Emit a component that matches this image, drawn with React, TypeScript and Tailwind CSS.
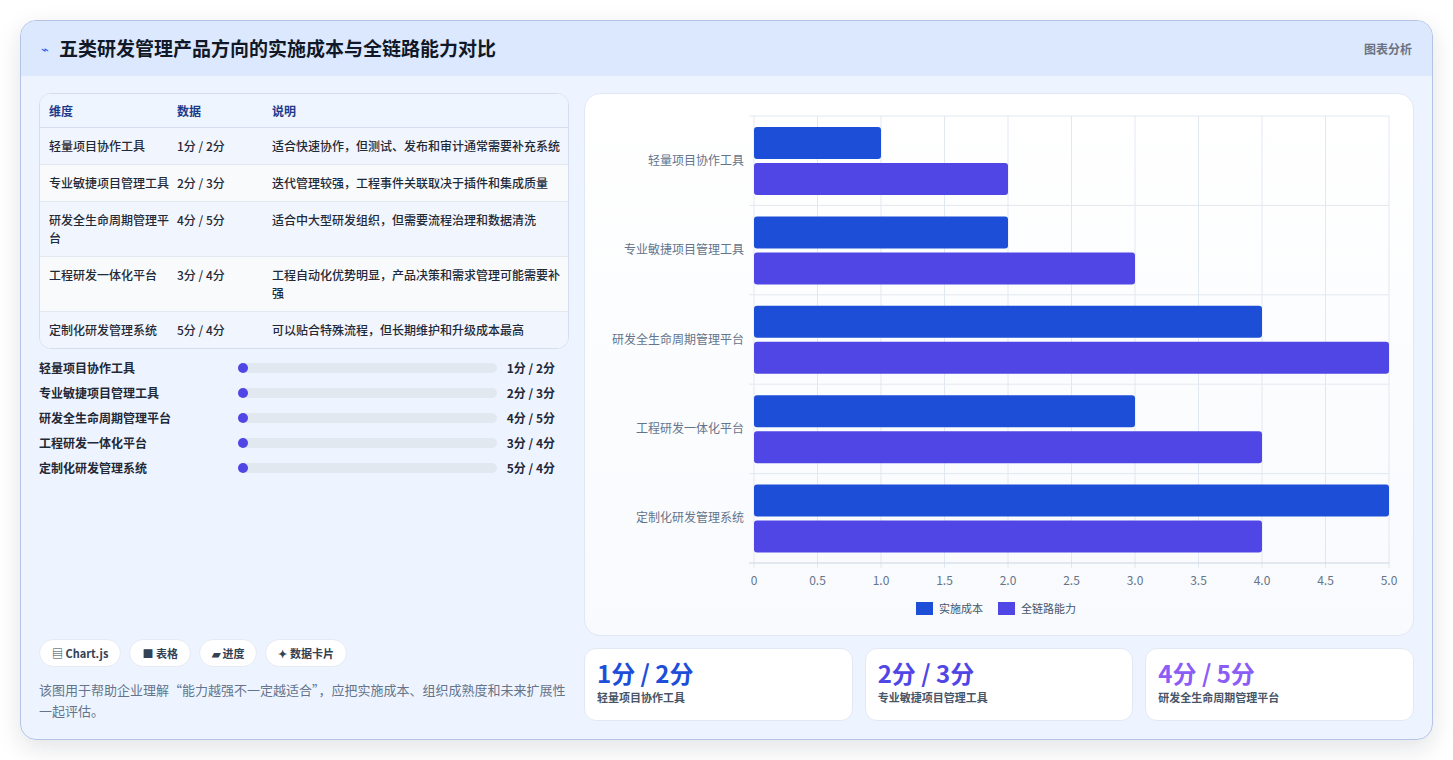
const rows = [
  { name: "轻量项目协作工具", data: "1分 / 2分", desc: "适合快速协作，但测试、发布和审计通常需要补充系统", a: 1, b: 2 },
  { name: "专业敏捷项目管理工具", data: "2分 / 3分", desc: "迭代管理较强，工程事件关联取决于插件和集成质量", a: 2, b: 3 },
  { name: "研发全生命周期管理平台", data: "4分 / 5分", desc: "适合中大型研发组织，但需要流程治理和数据清洗", a: 4, b: 5 },
  { name: "工程研发一体化平台", data: "3分 / 4分", desc: "工程自动化优势明显，产品决策和需求管理可能需要补强", a: 3, b: 4 },
  { name: "定制化研发管理系统", data: "5分 / 4分", desc: "可以贴合特殊流程，但长期维护和升级成本最高", a: 5, b: 4 },
];

function Chart() {
  const L = 169, R = 804, T = 22, B = 469;
  const unit = (R - L) / 5;
  const band = (B - T) / 5;
  const ticks = [0, 0.5, 1, 1.5, 2, 2.5, 3, 3.5, 4, 4.5, 5];
  return (
    <svg width="828" height="542" className="block" style={{ fontFamily: "'Noto Sans CJK SC', sans-serif" }}>
      {ticks.map((t) => (
        <line key={t} x1={L + t * unit} x2={L + t * unit} y1={T} y2={B + 5} stroke="#e2e8f0" />
      ))}
      {[0, 1, 2, 3, 4, 5].map((i) => (
        <line key={i} x1={L - 5} x2={R} y1={T + i * band} y2={T + i * band} stroke={i === 5 ? "#cbd5e1" : "#e2e8f0"} />
      ))}
      {rows.map((r, i) => {
        const y0 = T + i * band;
        return (
          <g key={r.name}>
            <rect x={L} y={y0 + 11} width={r.a * unit} height={32} rx={3} fill="#1d4ed8" />
            <rect x={L} y={y0 + 47} width={r.b * unit} height={32} rx={3} fill="#4f46e5" />
            <text x={L - 10} y={y0 + band / 2 + 4} textAnchor="end" fontSize="12" fill="#64748b">{r.name}</text>
          </g>
        );
      })}
      {ticks.map((t) => (
        <text key={t} x={L + t * unit} y={B + 22} textAnchor="middle" fontSize="12" fill="#64748b">{t === 0 ? "0" : t.toFixed(1)}</text>
      ))}
      <rect x={331} y={508} width={17} height={13} fill="#1d4ed8" />
      <text x={354} y={519} fontSize="11" fill="#475569">实施成本</text>
      <rect x={413} y={508} width={17} height={13} fill="#4f46e5" />
      <text x={436} y={519} fontSize="11" fill="#475569">全链路能力</text>
    </svg>
  );
}

export default function App() {
  return (
    <div className="min-h-screen bg-white p-5" style={{ fontFamily: "'Noto Sans CJK SC', 'Noto Sans', sans-serif" }}>
      <div className="h-[720px] w-[1413px] rounded-2xl border border-[#b4c3e6] bg-gradient-to-b from-[#edf3ff] to-[#eef4ff] shadow-[0_8px_24px_rgba(15,23,42,0.12)] overflow-hidden flex flex-col">
        <div className="h-[55px] shrink-0 bg-[#dce8fe] flex items-center justify-between px-5">
          <div className="flex items-center gap-2.5">
            <span className="text-[#2563eb] text-[13px]">⌁</span>
            <h1 className="text-[19px] font-bold text-[#111827]">五类研发管理产品方向的实施成本与全链路能力对比</h1>
          </div>
          <span className="text-[12px] font-semibold text-[#6b7280]">图表分析</span>
        </div>
        <div className="flex-1 flex gap-[15px] pl-[18px] pr-[18px] pt-[17px] pb-[18px]">
          <div className="w-[531px] flex flex-col">
            <div className="rounded-xl border border-[#d5deee] bg-white overflow-hidden text-[12px]">
              <div className="flex h-[34px] items-center bg-[#eff5ff] border-b border-[#d5deee] text-[#1e3a8a] font-semibold">
                <div className="w-[137px] pl-[9px]">维度</div>
                <div className="w-[95px] pl-0">数据</div>
                <div className="flex-1">说明</div>
              </div>
              {rows.map((r, i) => (
                <div key={r.name} className={`flex py-[9px] leading-[18px] text-[#1f2937] font-medium ${i % 2 ? "bg-[#f8fafc]" : "bg-[#f1f5fd]"} ${i < 4 ? "border-b border-[#e2e8f0]" : ""}`}>
                  <div className="w-[137px] pl-[9px] pr-2">{r.name}</div>
                  <div className="w-[95px]">{r.data}</div>
                  <div className="flex-1 pr-2">{r.desc}</div>
                </div>
              ))}
            </div>
            <div className="mt-[10px] flex flex-col gap-[7px]">
              {rows.map((r) => (
                <div key={r.name} className="flex items-center h-[18px] text-[12px] font-semibold text-[#1f2937]">
                  <div className="w-[199px]">{r.name}</div>
                  <div className="w-[259px] h-[10px] rounded-full bg-[#e2e8f0] relative">
                    <div className="w-[10px] h-[10px] rounded-full bg-[#4f46e5]" />
                  </div>
                  <div className="flex-1 text-right pr-[14px]">{r.data}</div>
                </div>
              ))}
            </div>
            <div className="mt-auto">
              <div className="flex gap-2 text-[11px] font-semibold text-[#334155]">
                {["▤ Chart.js", "■ 表格", "▰ 进度", "✦ 数据卡片"].map((c) => (
                  <span key={c} className="h-[28px] px-3 flex items-center rounded-full bg-white border border-[#e5eaf3]">{c}</span>
                ))}
              </div>
              <p className="mt-3 text-[13px] leading-[21px] text-[#64748b]">该图用于帮助企业理解“能力越强不一定越适合”，应把实施成本、组织成熟度和未来扩展性一起评估。</p>
            </div>
          </div>
          <div className="flex-1 flex flex-col gap-[12px]">
            <div className="h-[543px] rounded-2xl bg-gradient-to-b from-white to-[#f8fafd] border border-[#e2e8f3]">
              <Chart />
            </div>
            <div className="flex gap-3 h-[73px]">
              {[
                { v: "1分 / 2分", l: "轻量项目协作工具", c: "text-[#1d4ed8]" },
                { v: "2分 / 3分", l: "专业敏捷项目管理工具", c: "text-[#4f46e5]" },
                { v: "4分 / 5分", l: "研发全生命周期管理平台", c: "text-[#8b5cf6]" },
              ].map((s) => (
                <div key={s.l} className="flex-1 rounded-xl bg-white border border-[#e2e8f3] px-3 pt-2">
                  <div className={`text-[24px] font-bold leading-[32px] ${s.c}`}>{s.v}</div>
                  <div className="text-[11px] font-semibold text-[#475569] leading-[16px]">{s.l}</div>
                </div>
              ))}
            </div>
          </div>
        </div>
      </div>
    </div>
  );
}
